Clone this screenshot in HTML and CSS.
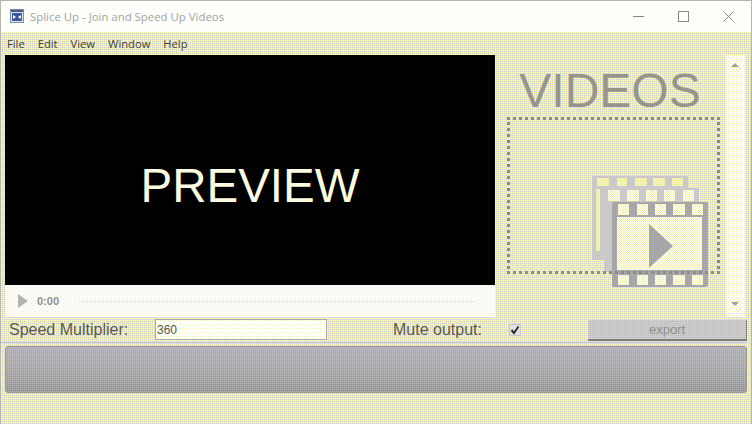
FILE: index.html
```html
<!DOCTYPE html>
<html lang="en">
<head>
<meta charset="utf-8">
<title>Splice Up - Join and Speed Up Videos</title>
<link rel="stylesheet" href="styles.css">
</head>
<body>
<div class="window">
  <header class="titlebar">
    <svg class="app-icon" width="16" height="16" viewBox="0 0 16 16">
      <rect x="1.500" y="1.500" width="13" height="13" fill="#dfe6f2" stroke="#7d8cab"/>
      <path d="M2 2h12v2H2z" fill="#4a5a86"/>
      <rect x="3" y="5" width="10" height="8" fill="#3a5a9a"/>
      <path d="M4 7l3 2-3 2zM12 7L9 9l3 2z" fill="#fff"/>
    </svg>
    <span class="title">Splice Up - Join and Speed Up Videos</span>
    <div class="caption">
      <svg class="cap" width="11" height="11" viewBox="0 0 11 11"><path d="M0 5.500h11" stroke="#8a8a80" fill="none"/></svg>
      <svg class="cap" width="11" height="11" viewBox="0 0 11 11"><rect x="0.500" y="0.500" width="10" height="10" stroke="#8a8a80" fill="none"/></svg>
      <svg class="cap" width="11" height="11" viewBox="0 0 11 11"><path d="M0.500 0.500l10 10M10.500 0.500l-10 10" stroke="#8a8a80" fill="none"/></svg>
    </div>
  </header>
  <nav class="menu">
    <span>File</span><span>Edit</span><span>View</span><span>Window</span><span>Help</span>
  </nav>
  <main class="top">
    <section class="player">
      <div class="screen">PREVIEW</div>
      <div class="controls">
        <svg class="play" width="12" height="14" viewBox="0 0 12 14"><path d="M1 0l10 7-10 7z" fill="#b4b4b4"/></svg>
        <span class="time">0:00</span>
        <div class="seek"></div>
      </div>
    </section>
    <aside class="videos">
      <div class="videos-title">VIDEOS</div>
      <svg class="film" width="118" height="114" viewBox="0 0 118 114" shape-rendering="crispEdges">
        <defs>
          <pattern id="gray" width="2" height="2" patternUnits="userSpaceOnUse">
            <rect width="2" height="2" fill="#a4a4a2"/>
            <rect width="1" height="1" fill="#aeaeb2"/>
            <rect x="1" y="1" width="1" height="1" fill="#a8a896"/>
          </pattern>
          <pattern id="soft" width="2" height="2" patternUnits="userSpaceOnUse">
            <rect width="2" height="2" fill="#c6c6c2"/>
            <rect width="1" height="1" fill="#cfcfd4"/>
            <rect x="1" y="1" width="1" height="1" fill="#cfcfa8"/>
          </pattern>
          <pattern id="light" width="2" height="2" patternUnits="userSpaceOnUse">
            <rect width="2" height="2" fill="#ffffff"/>
            <rect width="1" height="1" fill="#f6f3b0"/>
            <rect x="1" y="1" width="1" height="1" fill="#e6e6ee"/>
          </pattern>
          <pattern id="back" width="2" height="2" patternUnits="userSpaceOnUse">
            <rect width="2" height="2" fill="#f3f1c8"/>
            <rect width="1" height="1" fill="#efea8c"/>
          </pattern>
        </defs>
        <path fill="url(#soft)" d="M0 0h96v12H12v72H0z"/>
        <g fill="url(#back)">
          <rect x="5" y="2" width="12" height="8"/><rect x="25" y="2" width="10" height="8"/><rect x="43" y="2" width="12" height="8"/><rect x="61" y="2" width="12" height="8"/><rect x="80" y="2" width="11" height="8"/>
          <rect x="4" y="13" width="4" height="62"/>
        </g>
        <path fill="url(#soft)" d="M12 12h95v14H20v70h-8z"/>
        <g fill="url(#light)">
          <rect x="16" y="14" width="12" height="11"/><rect x="35" y="14" width="12" height="11"/><rect x="54" y="14" width="11" height="11"/><rect x="72" y="14" width="11" height="11"/><rect x="91" y="14" width="11" height="11"/>
        </g>
        <rect x="20" y="26" width="96" height="85" rx="2" fill="url(#gray)"/>
        <rect x="25" y="41" width="85" height="53" fill="url(#light)"/>
        <g fill="url(#light)">
          <rect x="26" y="28" width="11" height="11"/><rect x="45" y="28" width="11" height="11"/><rect x="63" y="28" width="11" height="11"/><rect x="81" y="28" width="12" height="11"/><rect x="100" y="28" width="11" height="11"/>
          <rect x="26" y="99" width="11" height="10"/><rect x="45" y="99" width="11" height="10"/><rect x="63" y="99" width="11" height="10"/><rect x="81" y="99" width="12" height="10"/><rect x="100" y="99" width="11" height="10"/>
        </g>
        <path d="M57 48l24 22-24 22z" fill="url(#gray)" shape-rendering="auto"/>
      </svg>
      <div class="drop"></div>
      <div class="scrollbar">
        <span class="arrow up"></span>
        <span class="arrow down"></span>
      </div>
    </aside>
  </main>
  <div class="options">
    <label class="lbl speed">Speed Multiplier:</label>
    <input class="multiplier" type="text" value="360">
    <label class="lbl mute">Mute output:</label>
    <span class="check">
      <svg width="10" height="10" viewBox="0 0 10 10"><path d="M1.500 5l2.500 3 4.500-6.500" stroke="#333" stroke-width="2" fill="none"/></svg>
    </span>
    <button class="export" type="button">export</button>
  </div>
  <div class="progress"></div>
</div>
</body>
</html>
```

FILE: styles.css
```css
* { box-sizing: border-box; }
html, body { margin: 0; padding: 0; }
body { width: 752px; height: 424px; overflow: hidden; font-family: "Liberation Sans", Arial, sans-serif; }
.window {
  width: 752px; height: 424px;
  display: flex; flex-direction: column;
  border: 1px solid #b5b5ae;
  border-bottom: 0;
  background: url("data:image/svg+xml,%3Csvg xmlns='http://www.w3.org/2000/svg' width='2' height='2' shape-rendering='crispEdges'%3E%3Crect width='1' height='1' fill='%23eeea84'/%3E%3Crect x='1' width='1' height='1' fill='%23d8d8e2'/%3E%3Crect y='1' width='1' height='1' fill='%23ffffff'/%3E%3Crect x='1' y='1' width='1' height='1' fill='%23ecea98'/%3E%3C/svg%3E") 0 0 / 2px 2px;
}
.titlebar {
  height: 31px; flex: none;
  display: flex; align-items: center;
  padding-left: 8px;
  background: #fffffb url("data:image/svg+xml,%3Csvg xmlns='http://www.w3.org/2000/svg' width='8' height='8' shape-rendering='crispEdges'%3E%3Crect width='1' height='1' fill='%23f8f4a0'/%3E%3Crect x='4' y='4' width='1' height='1' fill='%23f8f4a0'/%3E%3C/svg%3E") 0 0 / 8px 8px;
  color: #a3a39c;
}
.app-icon { flex: none; margin-right: 5px; margin-top: -1px; }
.title { font-family: "Open Sans", "Liberation Sans", sans-serif; font-size: 11.400px; margin-top: -1px; }
.caption { margin-left: auto; display: flex; gap: 34px; padding-right: 17px; margin-top: -1px; }
.cap { display: block; }
.menu {
  height: 23px; flex: none;
  display: flex; align-items: center; gap: 13px;
  padding-left: 6px;
  font-family: "Open Sans", "Liberation Sans", sans-serif;
  font-size: 11.200px; color: #3c3c3c;
}
.top { display: flex; height: 262px; flex: none; padding-left: 4px; }
.player { width: 490px; flex: none; display: flex; flex-direction: column; }
.screen {
  height: 230px; flex: none;
  display: flex; align-items: center; justify-content: center;
  background: #000; color: #fbfbe0;
  font-size: 47.500px; padding-top: 30px;
}
.controls {
  height: 32px; flex: none;
  display: flex; align-items: center;
  padding-left: 12px;
  background: #fefef8 url("data:image/svg+xml,%3Csvg xmlns='http://www.w3.org/2000/svg' width='4' height='4' shape-rendering='crispEdges'%3E%3Crect width='1' height='1' fill='%23f8f4a0'/%3E%3Crect x='2' y='2' width='1' height='1' fill='%23e4e4f0'/%3E%3C/svg%3E") 0 0 / 4px 4px;
}
.play { flex: none; }
.time { margin-left: 8px; font-size: 11px; font-weight: bold; color: #8f8f8a; }
.seek { height: 1px; width: 398px; margin-left: 20px; background: #e8e8e0; }
.videos { position: relative; flex: 1; margin-right: 6px; }
.videos-title {
  text-align: center; font-size: 48px; color: #96968c;
  padding-top: 9px; padding-right: 20px; line-height: 53px; height: 62px;
}
.drop {
  position: absolute; left: 12px; top: 62px;
  width: 213px; height: 157px;
  border: 3px dotted #8d8d88;
}
.film { position: absolute; left: 97px; top: 121px; }
.scrollbar {
  position: absolute; right: 0; top: 0; bottom: 0; width: 19px;
  background: #fefef8 url("data:image/svg+xml,%3Csvg xmlns='http://www.w3.org/2000/svg' width='4' height='4' shape-rendering='crispEdges'%3E%3Crect width='1' height='1' fill='%23f3ee80'/%3E%3Crect x='2' y='2' width='1' height='1' fill='%23d5d5e5'/%3E%3C/svg%3E") 0 0 / 4px 4px;
}
.arrow { position: absolute; left: 5px; width: 0; height: 0; border-left: 4px solid transparent; border-right: 4px solid transparent; }
.up { top: 8px; border-bottom: 4px solid #a0a09a; }
.down { bottom: 11px; border-top: 4px solid #a0a09a; }
.options {
  height: 26px; flex: none;
  display: flex; align-items: center;
  padding-left: 8px;
  border-bottom: 1px solid #c9c9c8;
  margin: 0 4px 0 0;
}
.lbl { font-size: 16px; color: #5a5a54; }
.speed { width: 146px; }
.multiplier {
  width: 172px; height: 21px; padding: 0 1px;
  border: 1px solid #a9a9b4;
  background: #fefef8 url("data:image/svg+xml,%3Csvg xmlns='http://www.w3.org/2000/svg' width='4' height='4' shape-rendering='crispEdges'%3E%3Crect width='1' height='1' fill='%23f8f4a0'/%3E%3C/svg%3E") 0 0 / 4px 4px;
  font-family: "Liberation Sans", sans-serif; font-size: 12px; color: #55554f;
  outline: 0;
}
.mute { margin-left: 66px; width: 116px; }
.check {
  width: 12px; height: 12px; display: flex; align-items: center; justify-content: center;
  background: #e2e2e6; border: 1px solid #c8c8c8;
}
.export {
  margin-left: 67px; margin-top: 1px; width: 159px; height: 21px; padding: 0;
  border: 0; border-right: 1px solid #7f7f76; border-bottom: 2px solid #7f7f76;
  background: url("data:image/svg+xml,%3Csvg xmlns='http://www.w3.org/2000/svg' width='2' height='2' shape-rendering='crispEdges'%3E%3Crect width='2' height='2' fill='%23c4c4c4'/%3E%3Crect x='1' width='1' height='1' fill='%23e0dca8'/%3E%3C/svg%3E") 0 0 / 2px 2px;
  color: #8e8e88;
  font-family: "Liberation Sans", sans-serif; font-size: 13px;
}
.progress {
  height: 47px; flex: none;
  margin: 3px 4px 0 4px;
  border: 1px solid #9b9b86; border-radius: 3px;
  background:
    url("data:image/svg+xml,%3Csvg xmlns='http://www.w3.org/2000/svg' width='2' height='2' shape-rendering='crispEdges'%3E%3Crect width='1' height='1' fill='%23c8c8d8' fill-opacity='.55'/%3E%3Crect x='1' y='1' width='1' height='1' fill='%23a0a080' fill-opacity='.4'/%3E%3C/svg%3E") 0 0 / 2px 2px,
    linear-gradient(#b2b2b4, #a9a9a6 55%, #969692);
}
```
